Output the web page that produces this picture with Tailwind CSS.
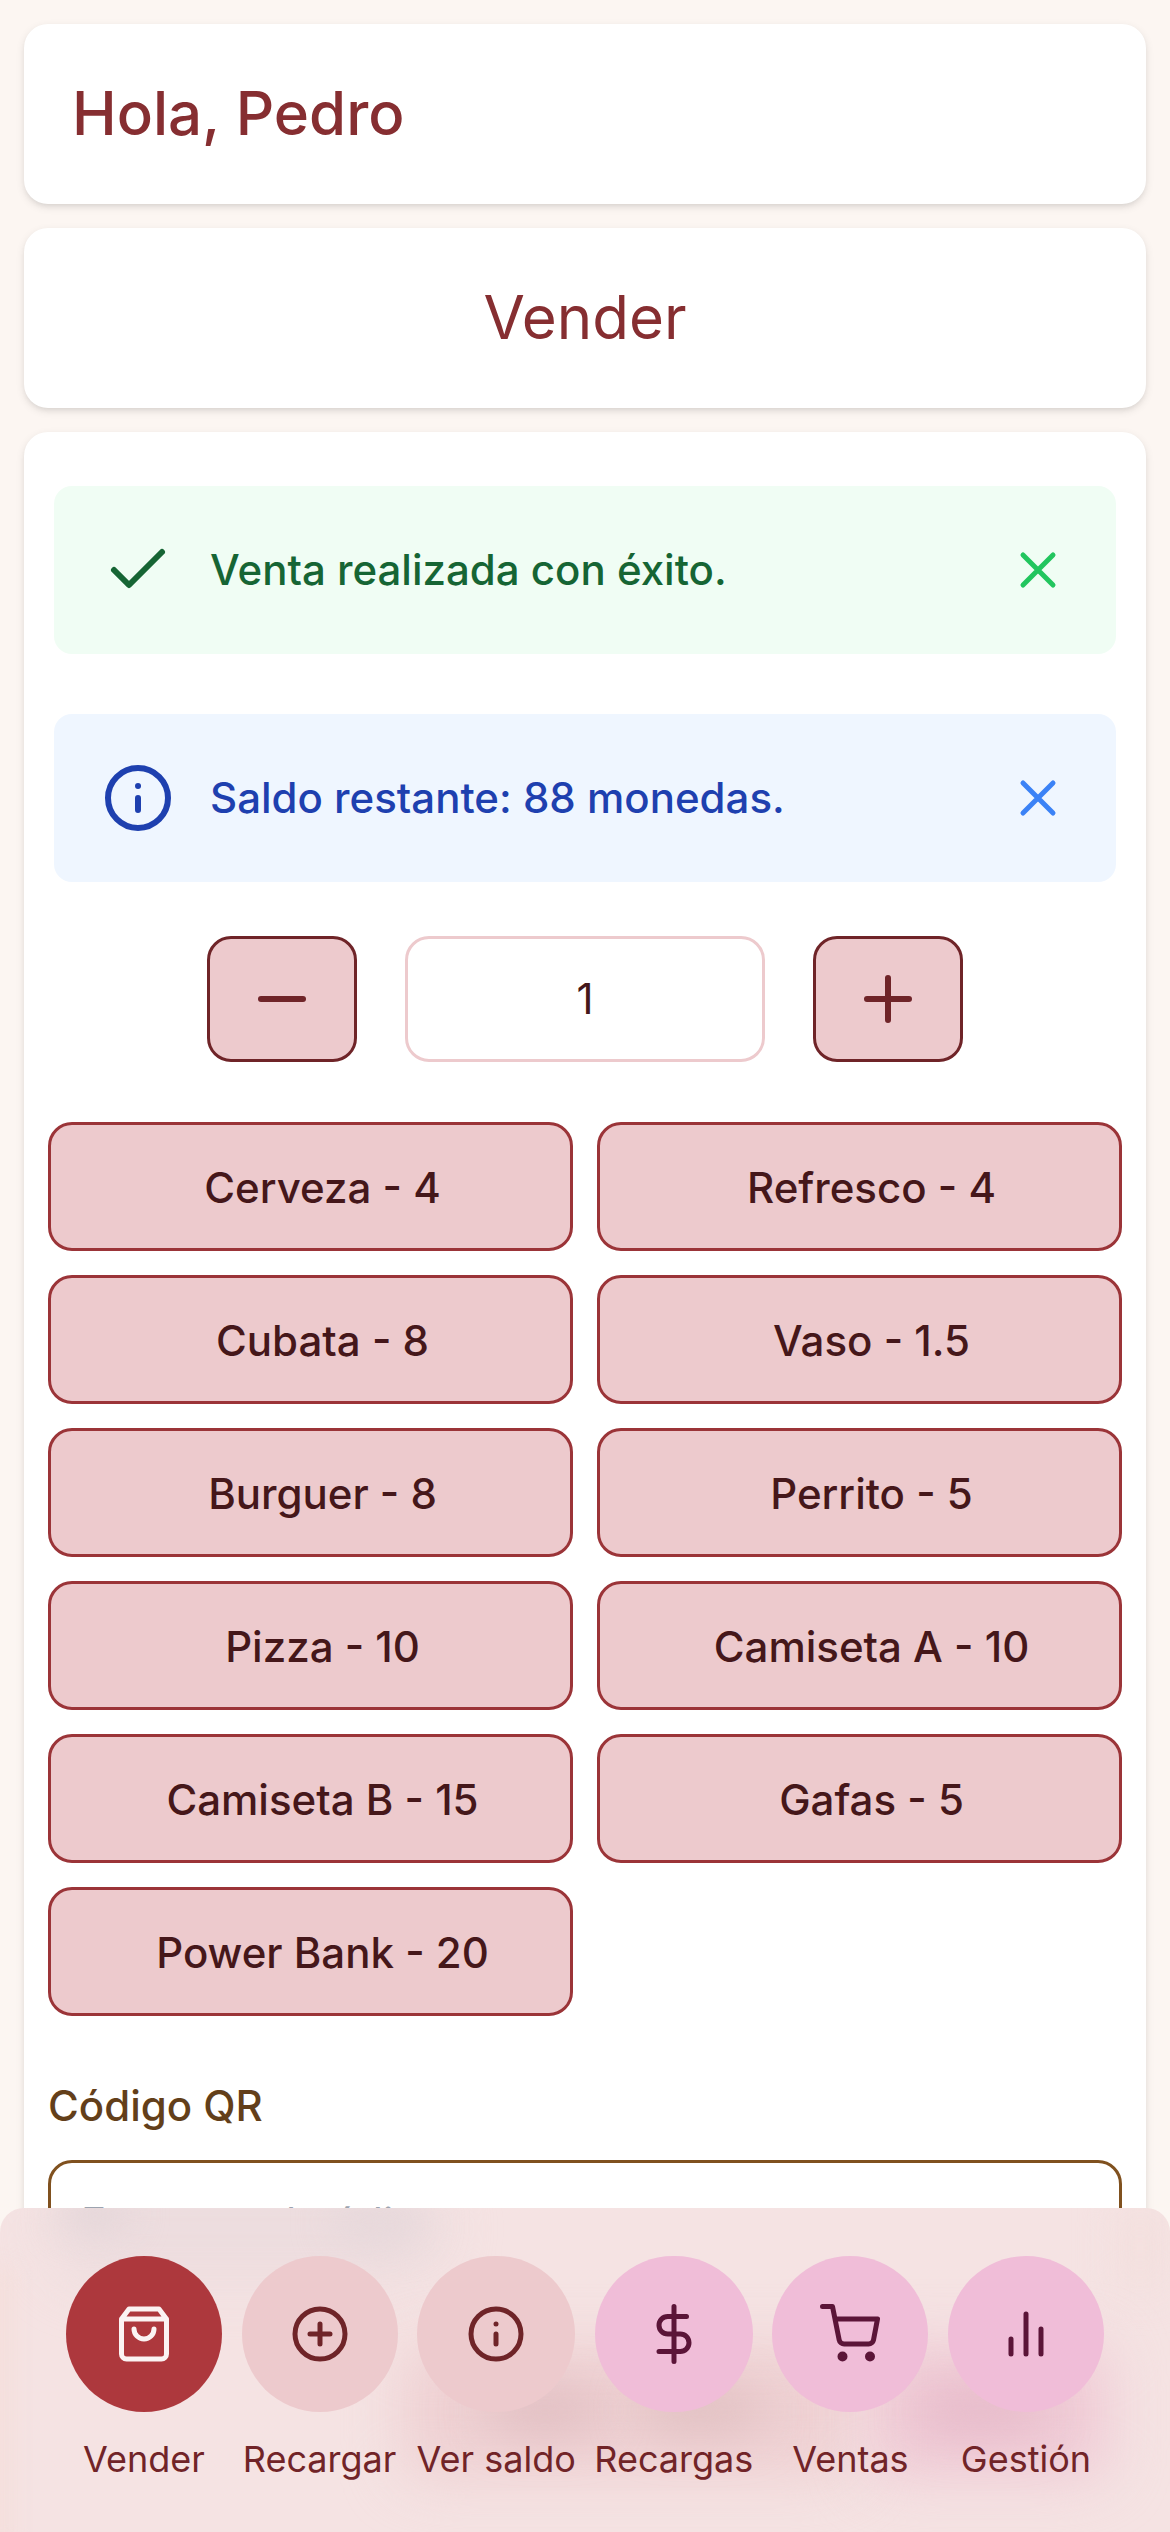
<!DOCTYPE html>
<html lang="es">
<head>
<meta charset="utf-8">
<title>Vender</title>
<script src="https://cdn.jsdelivr.net/npm/@tailwindcss/browser@4"></script>
</head>
<body class="h-[2532px] overflow-hidden bg-[#fcf6f2] font-['Inter',sans-serif]">
<main class="flex flex-col gap-6 p-6">
  <header class="flex h-[180px] items-center rounded-3xl bg-white px-12 pb-0.5 text-[60px] font-medium text-[#862e31] shadow-[0_3px_9px_rgba(0,0,0,0.1),0_3px_6px_-3px_rgba(0,0,0,0.1)]">Hola, Pedro</header>
  <h1 class="flex h-[180px] items-center justify-center rounded-3xl bg-white pb-0.5 text-[60px] font-normal text-[#862e31] shadow-[0_3px_9px_rgba(0,0,0,0.1),0_3px_6px_-3px_rgba(0,0,0,0.1)]">Vender</h1>

  <section class="flex h-[2200px] flex-col rounded-3xl bg-white px-6 pt-[54px] shadow-[0_3px_9px_rgba(0,0,0,0.1),0_3px_6px_-3px_rgba(0,0,0,0.1)]">
    <div class="flex flex-col gap-[60px] px-1.5">
      <div class="flex h-[168px] items-center rounded-[18px] bg-[#f0fdf4] px-12 text-[42px] font-medium text-[#166534]">
        <svg class="size-[72px]" viewBox="0 0 24 24" fill="none" stroke="currentColor" stroke-width="2" stroke-linecap="round" stroke-linejoin="round"><path d="M20 6 9 17l-5-5"/></svg>
        <span class="ml-9 flex-1 pb-0.5">Venta realizada con éxito.</span>
        <svg class="size-[60px] text-[#22c55e]" viewBox="0 0 24 24" fill="none" stroke="currentColor" stroke-width="2" stroke-linecap="round"><path d="M18 6 6 18M6 6l12 12"/></svg>
      </div>
      <div class="flex h-[168px] items-center rounded-[18px] bg-[#eff6ff] px-12 text-[42px] font-medium text-[#1e40af]">
        <svg class="size-[72px]" viewBox="0 0 24 24" fill="none" stroke="currentColor" stroke-width="2" stroke-linecap="round" stroke-linejoin="round"><circle cx="12" cy="12" r="10"/><path d="M12 16v-4M12 8h.01"/></svg>
        <span class="ml-9 flex-1 pb-0.5">Saldo restante: 88 monedas.</span>
        <svg class="size-[60px] text-[#3b82f6]" viewBox="0 0 24 24" fill="none" stroke="currentColor" stroke-width="2" stroke-linecap="round"><path d="M18 6 6 18M6 6l12 12"/></svg>
      </div>
    </div>

    <div class="mt-[54px] flex justify-center gap-12">
      <button class="flex h-[126px] w-[150px] items-center justify-center rounded-3xl border-3 border-[#6f2428] bg-[#edcacd] text-[#6f2428]">
        <svg class="size-[72px]" viewBox="0 0 24 24" fill="none" stroke="currentColor" stroke-width="2" stroke-linecap="round"><path d="M5 12h14"/></svg>
      </button>
      <div class="flex h-[126px] w-[360px] items-center justify-center rounded-3xl border-3 border-[#edcacd] bg-white pb-0.5 text-[42px] text-[#45171a]">1</div>
      <button class="flex h-[126px] w-[150px] items-center justify-center rounded-3xl border-3 border-[#6f2428] bg-[#edcacd] text-[#6f2428]">
        <svg class="size-[72px]" viewBox="0 0 24 24" fill="none" stroke="currentColor" stroke-width="2" stroke-linecap="round"><path d="M5 12h14M12 5v14"/></svg>
      </button>
    </div>

    <div class="mt-[60px] grid auto-rows-[129px] grid-cols-2 gap-6 text-[42px] font-medium text-[#45171a]">
      <button class="rounded-3xl border-3 border-[#9b3438] bg-[#edcacd] pt-0.5 pl-6">Cerveza - 4</button>
      <button class="rounded-3xl border-3 border-[#9b3438] bg-[#edcacd] pt-0.5 pl-6">Refresco - 4</button>
      <button class="rounded-3xl border-3 border-[#9b3438] bg-[#edcacd] pt-0.5 pl-6">Cubata - 8</button>
      <button class="rounded-3xl border-3 border-[#9b3438] bg-[#edcacd] pt-0.5 pl-6">Vaso - 1.5</button>
      <button class="rounded-3xl border-3 border-[#9b3438] bg-[#edcacd] pt-0.5 pl-6">Burguer - 8</button>
      <button class="rounded-3xl border-3 border-[#9b3438] bg-[#edcacd] pt-0.5 pl-6">Perrito - 5</button>
      <button class="rounded-3xl border-3 border-[#9b3438] bg-[#edcacd] pt-0.5 pl-6">Pizza - 10</button>
      <button class="rounded-3xl border-3 border-[#9b3438] bg-[#edcacd] pt-0.5 pl-6">Camiseta A - 10</button>
      <button class="rounded-3xl border-3 border-[#9b3438] bg-[#edcacd] pt-0.5 pl-6">Camiseta B - 15</button>
      <button class="rounded-3xl border-3 border-[#9b3438] bg-[#edcacd] pt-0.5 pl-6">Gafas - 5</button>
      <button class="rounded-3xl border-3 border-[#9b3438] bg-[#edcacd] pt-0.5 pl-6">Power Bank - 20</button>
    </div>

    <label class="mt-[60px] text-[42px] leading-[60px] font-medium text-[#633f1a]">Código QR</label>
    <div class="mt-6 flex h-[126px] shrink-0 items-center rounded-3xl border-3 border-[#80511f] pb-0.5 pl-[30px] text-[42px] text-[#9ca3af]">Escanea el código</div>
  </section>
</main>

<nav class="fixed inset-x-0 bottom-0 h-[324px] overflow-hidden rounded-t-3xl bg-[#f5e3e3] text-4xl text-[#712428]">
  <!-- frosted-glass tints of the content behind the bar -->
  <div class="absolute top-[-30px] left-[50px] h-[100px] w-[390px] rounded-full bg-[#ecdcde] blur-[28px]"></div>
  <div class="absolute top-[-10px] left-[60px] h-[30px] w-[70px] rounded-full bg-[#e3d5d8] blur-[18px]"></div>
  <div class="absolute top-[-4px] left-[335px] h-[36px] w-[90px] rounded-full bg-[#e5d7da] blur-[20px]"></div>
  <div class="absolute top-0 left-[1120px] h-[80px] w-[40px] bg-[#f3dfdd] blur-[20px]"></div>
  <div class="absolute top-[60px] left-[-14px] h-[280px] w-[28px] bg-[#f4dfdc] blur-[10px]"></div>
  <div class="absolute top-[138px] left-[402px] h-[132px] w-[450px] rounded-3xl bg-[#eed0d2] blur-[28px]"></div>
  <div class="absolute top-[182px] left-[490px] h-[40px] w-[110px] rounded-full bg-[#dfbcc0] blur-[24px]"></div>
  <div class="absolute top-[182px] left-[640px] h-[40px] w-[120px] rounded-full bg-[#dfbec0] blur-[24px]"></div>
  <div class="absolute top-[138px] left-[868px] h-[132px] w-[240px] rounded-3xl bg-[#efcad5] blur-[28px]"></div>
  <div class="absolute top-[180px] left-[920px] h-[44px] w-[120px] rounded-full bg-[#e6b9c9] blur-[24px]"></div>

  <div class="relative flex h-full items-start justify-between px-[66px] pt-12">
    <a class="flex w-[156px] flex-col items-center gap-[23px]">
      <span class="flex h-[156px] w-full items-center justify-center rounded-full bg-[#ad383d] text-[#fbf3f3]"><svg class="size-[60px]" viewBox="0 0 24 24" fill="none" stroke="currentColor" stroke-width="2" stroke-linecap="round" stroke-linejoin="round"><path d="M6 2 3 6v14a2 2 0 0 0 2 2h14a2 2 0 0 0 2-2V6l-3-4ZM3 6h18M16 10a4 4 0 0 1-8 0"/></svg></span>
      <span class="leading-12 whitespace-nowrap">Vender</span>
    </a>
    <a class="flex w-[156px] flex-col items-center gap-[23px]">
      <span class="flex h-[156px] w-full items-center justify-center rounded-full bg-[#edcacd] text-[#6f2428]"><svg class="size-[60px]" viewBox="0 0 24 24" fill="none" stroke="currentColor" stroke-width="2" stroke-linecap="round" stroke-linejoin="round"><circle cx="12" cy="12" r="10"/><path d="M8 12h8M12 8v8"/></svg></span>
      <span class="leading-12 whitespace-nowrap">Recargar</span>
    </a>
    <a class="flex w-[158px] flex-col items-center gap-[23px]">
      <span class="flex h-[156px] w-full items-center justify-center rounded-full bg-[#edcacd] text-[#6f2428]"><svg class="size-[60px]" viewBox="0 0 24 24" fill="none" stroke="currentColor" stroke-width="2" stroke-linecap="round" stroke-linejoin="round"><circle cx="12" cy="12" r="10"/><path d="M12 16v-4M12 8h.01"/></svg></span>
      <span class="leading-12 whitespace-nowrap">Ver saldo</span>
    </a>
    <a class="flex w-[158px] flex-col items-center gap-[23px]">
      <span class="flex h-[156px] w-full items-center justify-center rounded-full bg-[#f0bdd8] text-[#5b1538]"><svg class="size-[60px]" viewBox="0 0 24 24" fill="none" stroke="currentColor" stroke-width="2" stroke-linecap="round" stroke-linejoin="round"><path d="M12 1v22M17 5H9.5a3.5 3.5 0 0 0 0 7h5a3.5 3.5 0 0 1 0 7H6"/></svg></span>
      <span class="leading-12 whitespace-nowrap">Recargas</span>
    </a>
    <a class="flex w-[156px] flex-col items-center gap-[23px]">
      <span class="flex h-[156px] w-full items-center justify-center rounded-full bg-[#f0bdd8] text-[#5b1538]"><svg class="size-[60px]" viewBox="0 0 24 24" fill="none" stroke="currentColor" stroke-width="2" stroke-linecap="round" stroke-linejoin="round"><circle cx="9" cy="21" r="1"/><circle cx="20" cy="21" r="1"/><path d="M1 1h4l2.68 13.39a2 2 0 0 0 2 1.61h9.72a2 2 0 0 0 2-1.61L23 6H6"/></svg></span>
      <span class="leading-12 whitespace-nowrap">Ventas</span>
    </a>
    <a class="flex w-[156px] flex-col items-center gap-[23px]">
      <span class="flex h-[156px] w-full items-center justify-center rounded-full bg-[#f0bdd8] text-[#5b1538]"><svg class="size-[60px]" viewBox="0 0 24 24" fill="none" stroke="currentColor" stroke-width="2" stroke-linecap="round" stroke-linejoin="round"><path d="M18 20V10M12 20V4M6 20v-6"/></svg></span>
      <span class="leading-12 whitespace-nowrap">Gestión</span>
    </a>
  </div>
</nav>
</body>
</html>
